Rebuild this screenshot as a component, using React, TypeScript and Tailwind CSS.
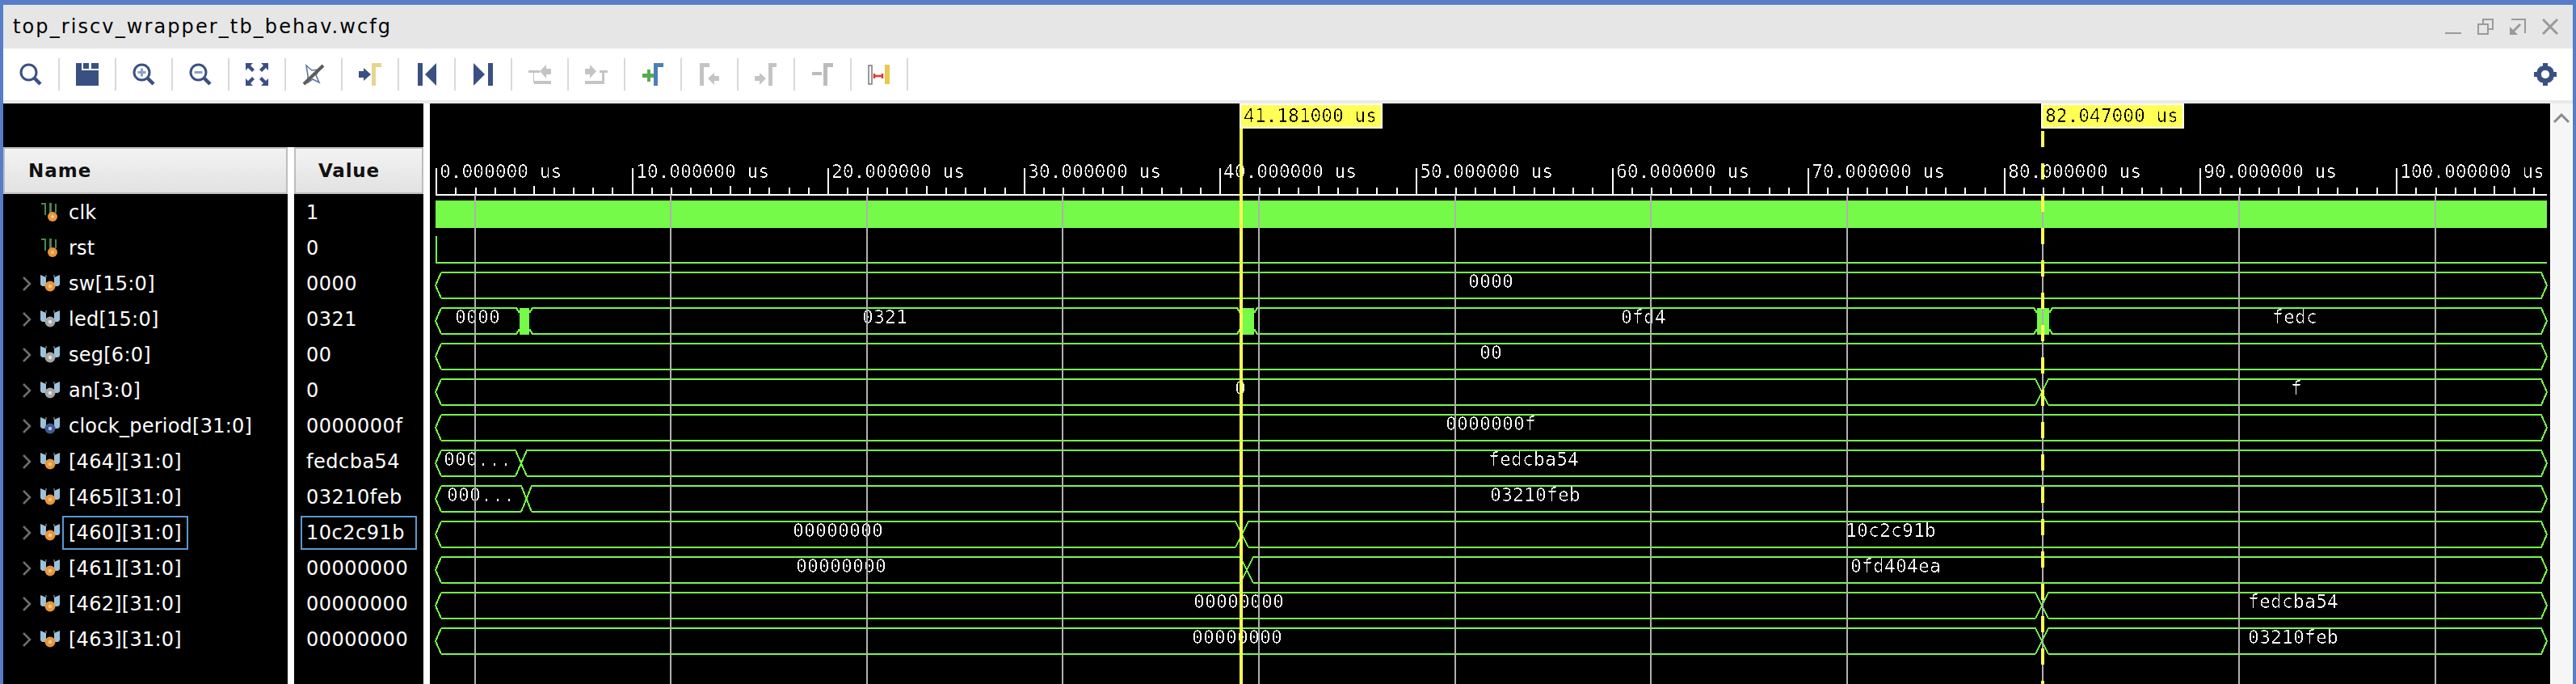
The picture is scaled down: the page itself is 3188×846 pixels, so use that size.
import React from 'react';

const NAVY = '#3a5082';
const DIS = '#c4c4c4';
const GREEN = '#76fa4a';

const tx = (t: number) => 539 + 24.26 * t;
const rowY = (i: number) => 265 + 44 * i;

type Sig = { name: string; value: string; kind: 'bit' | 'in' | 'out' | 'param' | 'mem'; selected?: boolean };

const signals: Sig[] = [
  { name: 'clk', value: '1', kind: 'bit' },
  { name: 'rst', value: '0', kind: 'bit' },
  { name: 'sw[15:0]', value: '0000', kind: 'in' },
  { name: 'led[15:0]', value: '0321', kind: 'out' },
  { name: 'seg[6:0]', value: '00', kind: 'out' },
  { name: 'an[3:0]', value: '0', kind: 'out' },
  { name: 'clock_period[31:0]', value: '0000000f', kind: 'param' },
  { name: '[464][31:0]', value: 'fedcba54', kind: 'mem' },
  { name: '[465][31:0]', value: '03210feb', kind: 'mem' },
  { name: '[460][31:0]', value: '10c2c91b', kind: 'mem', selected: true },
  { name: '[461][31:0]', value: '00000000', kind: 'mem' },
  { name: '[462][31:0]', value: '00000000', kind: 'mem' },
  { name: '[463][31:0]', value: '00000000', kind: 'mem' },
];

// bus rows: edges are [start, end] of each transition, labels are [text, centre x]
type Bus = { row: number; edges: [number, number][]; dense?: boolean; labels: [string, number][] };

const buses: Bus[] = [
  { row: 2, edges: [], labels: [['0000', 1845]] },
  { row: 3, edges: [[643, 655], [1535, 1552], [2521, 2536]], dense: true, labels: [['0000', 591], ['0321', 1095], ['0fd4', 2034], ['fedc', 2840]] },
  { row: 4, edges: [], labels: [['00', 1845]] },
  { row: 5, edges: [[2519, 2535]], labels: [['0', 1535], ['f', 2842]] },
  { row: 6, edges: [], labels: [['0000000f', 1845]] },
  { row: 7, edges: [[638, 652]], labels: [['000...', 591], ['fedcba54', 1898]] },
  { row: 8, edges: [[645, 658]], labels: [['000...', 595], ['03210feb', 1900]] },
  { row: 9, edges: [[1529, 1545]], labels: [['00000000', 1037], ['10c2c91b', 2340]] },
  { row: 10, edges: [[1535, 1551]], labels: [['00000000', 1041], ['0fd404ea', 2346]] },
  { row: 11, edges: [[2519, 2535]], labels: [['00000000', 1533], ['fedcba54', 2838]] },
  { row: 12, edges: [[2519, 2535]], labels: [['00000000', 1531], ['03210feb', 2838]] },
];

function BusRow({ bus }: { bus: Bus }) {
  const cy = rowY(bus.row);
  const t = cy - 16;
  const b = cy + 16;
  let d = `M546 ${t}L539 ${cy}L546 ${b}`;
  const blocks: React.ReactNode[] = [];
  let topD = `M546 ${t}`;
  let botD = `M546 ${b}`;
  bus.edges.forEach(([x0, x1], i) => {
    if (bus.dense) {
      topD += `H${x0 - 4}L${x0} ${cy - 10}M${x1} ${cy - 10}L${x1 + 4} ${t}`;
      botD += `H${x0 - 4}L${x0} ${cy + 10}M${x1} ${cy + 10}L${x1 + 4} ${b}`;
      blocks.push(<rect key={i} x={x0} y={t} width={x1 - x0} height={33} fill={GREEN} />);
    } else {
      topD += `H${x0}L${x1} ${b}M${x0} ${b}L${x1} ${t}`;
      botD += `H${x0}M${x1} ${b}`;
    }
  });
  topD += `H3145L3152 ${cy}`;
  botD += `H3145L3152 ${cy}`;
  d += topD + botD;
  return (
    <g>
      <path d={d} fill="none" stroke={GREEN} strokeWidth="2" shapeRendering="crispEdges" />
      {blocks}
      {bus.labels.map(([s, x]) => (
        <text key={s + x} x={x} y={cy + 3} textAnchor="middle" fill="#fff" fontSize="23" letterSpacing="0.15" filter="url(#px)">
          {s}
        </text>
      ))}
    </g>
  );
}

function Ruler() {
  const ticks: React.ReactNode[] = [];
  for (let t = 0; t <= 107; t++) {
    const x = Math.round(tx(t));
    const top = t % 10 === 0 ? 208 : t % 5 === 0 ? 230 : 232;
    ticks.push(<rect key={t} x={x} y={top} width="2" height={240 - top} fill="#fff" />);
  }
  const labels: React.ReactNode[] = [];
  for (let t = 0; t <= 100; t += 10) {
    labels.push(
      <text key={t} x={Math.round(tx(t)) + 5} y="220" fill="#fff" fontSize="23" letterSpacing="-0.1" filter="url(#px)">
        {t}.000000 us
      </text>,
    );
  }
  return (
    <g shapeRendering="crispEdges">
      {ticks}
      <rect x="539" y="240" width="2613" height="2" fill="#fff" />
      {labels}
    </g>
  );
}

function Marker({ x, label, dashed }: { x: number; label: string; dashed?: boolean }) {
  return (
    <g shapeRendering="crispEdges">
      {dashed ? (
        <line x1={x + 2} y1="162" x2={x + 2} y2="846" stroke="#ffff55" strokeWidth="4" strokeDasharray="20 20" />
      ) : (
        <rect x={x} y="128" width="4" height="718" fill="#ffff55" />
      )}
      <rect x={x + 1} y="129" width="175" height="29" fill="#ffff55" stroke="#fff" strokeWidth="2" />
      <text x={x + 5} y="151" fill="#000" fontSize="23" letterSpacing="-0.1" filter="url(#px)">
        {label}
      </text>
    </g>
  );
}

function Waves() {
  const grid = [2, 12, 22, 32, 42, 52, 62, 72, 82, 92, 102];
  return (
    <svg viewBox="532 128 2624 718" width="2624" height="718" className="block font-['DejaVu_Sans_Mono',monospace]">
      <defs>
        <filter id="px" x="-5%" y="-20%" width="110%" height="140%" colorInterpolationFilters="sRGB">
          <feComponentTransfer>
            <feFuncA type="discrete" tableValues="0 0 0 1" />
          </feComponentTransfer>
        </filter>
      </defs>
      <Ruler />
      <rect x="539" y="248" width="2613" height="34" fill={GREEN} />
      <path d="M540 292V325H3152" fill="none" stroke={GREEN} strokeWidth="2" shapeRendering="crispEdges" />
      {buses.map((b) => (
        <BusRow key={b.row} bus={b} />
      ))}
      {grid.map((t) => (
        <rect key={t} x={Math.round(tx(t)) - 1} y="241" width="2" height="605" fill="#b0b0b0" shapeRendering="crispEdges" />
      ))}
      <Marker x={1534} label="41.181000 us" />
      <Marker x={2526} label="82.047000 us" dashed />
    </svg>
  );
}

function Icon({ children }: { children: React.ReactNode }) {
  return (
    <svg width="28" height="28" viewBox="0 0 28 28" className="block">
      {children}
    </svg>
  );
}

const Lens = ({ children }: { children?: React.ReactNode }) => (
  <Icon>
    <circle cx="11.5" cy="11.5" r="9.5" fill="none" stroke={NAVY} strokeWidth="3" />
    <path d="M19 19L26 26" stroke={NAVY} strokeWidth="4.5" />
    {children}
  </Icon>
);

const Flag = ({ x, color, w = 12 }: { x: number; color: string; w?: number }) => (
  <path d={`M${x} 28V0H${x + w}V5H${x + 5}V28Z`} fill={color} />
);

const toolIcons: React.ReactNode[] = [
  <Lens />,
  <Icon>
    <path d="M0 0H28V28H0Z" fill={NAVY} />
    <path d="M7 0V9H28V7H19V0H16V7H9V0Z" fill="#fff" />
  </Icon>,
  <Lens>
    <path d="M6.5 11.5H16.5M11.5 6.5V16.5" stroke="#8ea1c3" strokeWidth="3" />
  </Lens>,
  <Lens>
    <path d="M6.5 11.5H16.5" stroke="#8ea1c3" strokeWidth="3" />
  </Lens>,
  <Icon>
    <path d="M0 0H9L6 3L11 8L8 11L3 6L0 9ZM28 0V9L25 6L20 11L17 8L22 3L19 0ZM0 28V19L3 22L8 17L11 20L6 25L9 28ZM28 28H19L22 25L17 20L20 17L25 22L28 19Z" fill={NAVY} />
  </Icon>,
  <Icon>
    <path d="M5 3L12 9L21 8L17 15L21 24L13 20L7 24L7 15Z" fill="none" stroke="#5f76a6" strokeWidth="1.6" />
    <path d="M2 26L26 3" stroke="#5c5c5c" strokeWidth="4" />
  </Icon>,
  <Icon>
    <Flag x={16} color="#e6d58f" />
    <path d="M0 10H6V6L15 14L6 22V18H0Z" fill={NAVY} />
  </Icon>,
  <Icon>
    <path d="M3 0H9V28H3Z" fill={NAVY} />
    <path d="M26 0V28L12 14Z" fill={NAVY} />
  </Icon>,
  <Icon>
    <path d="M2 0V28L16 14Z" fill={NAVY} />
    <path d="M20 0H26V28H20Z" fill={NAVY} />
  </Icon>,
  <Icon>
    <path d="M14 10L22 2V7H28V14H22V19Z" fill={DIS} />
    <path d="M0 9H14V12H7V22H28V26H7V24H6V12H0Z" fill={DIS} />
  </Icon>,
  <Icon>
    <path d="M14 10L6 2V7H0V14H6V19Z" fill={DIS} />
    <path d="M28 9H18V12H21V22H0V26H24V12H28Z" fill={DIS} />
  </Icon>,
  <Icon>
    <path d="M7 8V13H1V18H7V23H11V18H16V13H11V8Z" fill="#5aaa50" />
    <Flag x={15} color="#4a7fb5" />
  </Icon>,
  <Icon>
    <Flag x={2} color={DIS} />
    <path d="M12 19L20 12V16H26V22H20V27Z" fill={DIS} />
  </Icon>,
  <Icon>
    <Flag x={17} color={DIS} w={10} />
    <path d="M14 19L6 12V16H0V22H6V27Z" fill={DIS} />
  </Icon>,
  <Icon>
    <path d="M1 11H13V15H1Z" fill="#bcbcbc" />
    <Flag x={15} color="#bcbcbc" />
  </Icon>,
  <Icon>
    <rect x="1" y="3" width="4" height="23" fill="none" stroke="#7a7a7a" strokeWidth="1.5" />
    <path d="M21 2H27V26H21Z" fill="#e8c84e" />
    <path d="M7 16H19M8 13V19M18 13V19" stroke="#e03a2e" strokeWidth="2.5" />
  </Icon>,
];

function Gear() {
  return (
    <svg width="28" height="28" viewBox="0 0 28 28" className="block">
      <circle cx="14" cy="14" r="8" fill="none" stroke={NAVY} strokeWidth="6" />
      <path d="M11 0H17V6H11ZM11 22H17V28H11ZM0 11H6V17H0ZM22 11H28V17H22Z" fill={NAVY} />
      <path d="M4 8L8 4L12 8L8 12ZM20 4L24 8L20 12L16 8ZM4 20L8 16L12 20L8 24ZM20 16L24 20L20 24L16 20Z" fill={NAVY} />
      <circle cx="14" cy="14" r="5" fill="#fff" />
    </svg>
  );
}

function WindowButtons() {
  const c = '#9a9a9a';
  return (
    <div className="flex items-center gap-[20px] pr-[18px]">
      <svg width="20" height="20" viewBox="0 0 20 20">
        <path d="M0 18H20" stroke={c} strokeWidth="2" />
      </svg>
      <svg width="20" height="20" viewBox="0 0 20 20" fill="none" stroke={c} strokeWidth="2">
        <path d="M1 7H13V19H1Z" />
        <path d="M7 7V1H19V13H13" />
      </svg>
      <svg width="20" height="20" viewBox="0 0 20 20" fill="none" stroke={c} strokeWidth="2">
        <path d="M2 1H19V18" />
        <path d="M13 7L4 16" strokeWidth="3" />
        <path d="M0 10V20H10Z" fill={c} stroke="none" />
      </svg>
      <svg width="20" height="20" viewBox="0 0 20 20" fill="none" stroke={c} strokeWidth="3">
        <path d="M1 1L19 19M19 1L1 19" />
      </svg>
    </div>
  );
}

function SignalIcon({ kind }: { kind: Sig['kind'] }) {
  if (kind === 'bit') {
    return (
      <svg width="24" height="24" viewBox="0 0 24 24" className="block">
        <path d="M1 1H6V15M12 15V1H14M19 1V12" fill="none" stroke="#3f8f45" strokeWidth="2" />
        <path d="M13 2V12" stroke="#6a6a6a" strokeWidth="2" />
        <circle cx="15" cy="17" r="6" fill="#e8963c" />
        <circle cx="15" cy="17" r="2" fill="#f6c98d" />
      </svg>
    );
  }
  const dot = kind === 'out' ? '#a6a6a6' : kind === 'param' ? '#3f5a94' : '#e8963c';
  return (
    <svg width="24" height="22" viewBox="0 0 24 22" className="block">
      <path d="M0 0L7 3V10L10 14H2L0 12ZM24 0L17 3V10L14 14H22L24 12Z" fill="#9cc2da" />
      <path d="M7 0V3M17 0V3" stroke="#5a5a5a" strokeWidth="2" />
      <circle cx="12" cy="14" r="6.5" fill={dot} />
      <circle cx="12" cy="14" r="2.2" fill={kind === 'param' ? '#b9c8e4' : kind === 'out' ? '#e4e4e4' : '#f6c98d'} />
    </svg>
  );
}

function Chevron() {
  return (
    <svg width="12" height="18" viewBox="0 0 12 18" className="block" fill="none" stroke="#6e6e6e" strokeWidth="2.5">
      <path d="M2 1L10 9L2 17" />
    </svg>
  );
}

export default function App() {
  return (
    <div className="w-[3188px] h-[846px] overflow-hidden bg-[#567dc8] pt-[6px] px-[4px] flex flex-col font-['DejaVu_Sans',sans-serif]">
      <div className="h-[54px] shrink-0 bg-[#e6e6e6] flex items-center justify-between">
        <span className="pl-[12px] text-[24px] tracking-[2.1px] text-black leading-none">top_riscv_wrapper_tb_behav.wcfg</span>
        <WindowButtons />
      </div>

      <div className="h-[68px] shrink-0 bg-white border-b-4 border-[#e9e9e9] flex items-center justify-between">
        <div className="flex items-center">
          {toolIcons.map((ic, i) => (
            <div key={i} className="w-[70px] h-[40px] border-r-2 border-[#d9d9d9] flex items-center justify-center">
              {ic}
            </div>
          ))}
        </div>
        <div className="pr-[20px]">
          <Gear />
        </div>
      </div>

      <div className="flex-1 flex min-h-0 bg-white">
        <div className="w-[520px] shrink-0 flex flex-col">
          <div className="h-[54px] shrink-0 bg-black" />
          <div className="flex flex-1 min-h-0 gap-[8px]">
            <div className="w-[352px] bg-black flex flex-col">
              <div className="h-[58px] mb-px shrink-0 border-2 border-[#bdbdbd] bg-gradient-to-b from-[#f3f3f3] to-[#e2e2e2] flex items-center pl-[29px] font-bold text-[23px] tracking-[1px] text-[#111]">
                Name
              </div>
              {signals.map((s) => (
                <div key={s.name} className="h-[44px] shrink-0 flex items-center text-white text-[24px] tracking-[.25px]">
                  <div className="w-[46px] shrink-0 flex justify-end pr-[11px]">{s.kind !== 'bit' && <Chevron />}</div>
                  <div className="w-[26px] shrink-0">
                    <SignalIcon kind={s.kind} />
                  </div>
                  <span className={`pl-[6px] pr-[6px] ml-[1px] h-[42px] leading-[38px] whitespace-nowrap border-2 ${s.selected ? 'border-[#5a98d0]' : 'border-transparent'}`}>
                    {s.name}
                  </span>
                </div>
              ))}
            </div>
            <div className="w-[160px] bg-black flex flex-col">
              <div className="h-[58px] mb-px shrink-0 border-2 border-[#bdbdbd] bg-gradient-to-b from-[#f3f3f3] to-[#e2e2e2] flex items-center pl-[28px] font-bold text-[23px] tracking-[.8px] text-[#111]">
                Value
              </div>
              {signals.map((s) => (
                <div key={s.name} className="h-[44px] shrink-0 flex items-center pl-[8px] text-white text-[24px] tracking-[.5px]">
                  <span className={`w-[144px] pl-[5px] h-[42px] leading-[38px] whitespace-nowrap border-2 ${s.selected ? 'border-[#5a98d0]' : 'border-transparent'}`}>
                    {s.value}
                  </span>
                </div>
              ))}
            </div>
          </div>
        </div>
        <div className="w-[8px] shrink-0" />
        <div className="w-[2624px] shrink-0 bg-black">
          <Waves />
        </div>
        <div className="flex-1 bg-[#f6f6f6] border-x-2 border-white flex justify-center pt-[12px]">
          <svg width="20" height="12" viewBox="0 0 20 12" fill="none" stroke="#8a8a8a" strokeWidth="3">
            <path d="M1 11L10 2L19 11" />
          </svg>
        </div>
      </div>
    </div>
  );
}
